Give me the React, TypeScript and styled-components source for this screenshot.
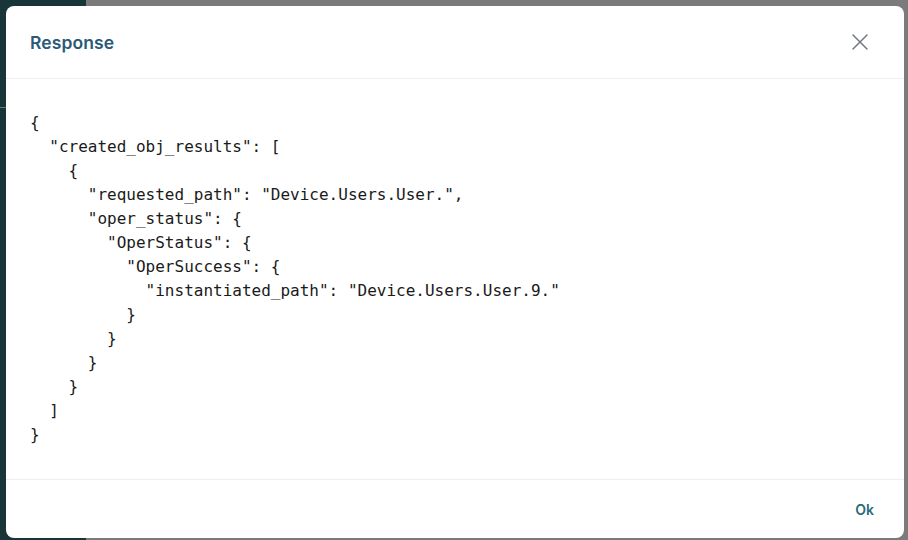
import React from 'react';
import styled, { createGlobalStyle } from 'styled-components';

const GlobalStyle = createGlobalStyle`
  html, body {
    margin: 0;
    padding: 0;
    width: 908px;
    height: 540px;
    overflow: hidden;
    font-family: Inter, "Noto Sans", sans-serif;
  }
`;

const Page = styled.div`
  position: relative;
  display: flex;
  width: 908px;
  height: 540px;
`;

const Sidebar = styled.div`
  width: 86px;
  background: #183638;
  display: flex;
  flex-direction: column;
`;

const SidebarRule = styled.div`
  margin-top: 107px;
  height: 1px;
  background: #6a7a7a;
`;

const Main = styled.div`
  flex: 1;
  background: #7b7b7b;
`;

const Overlay = styled.div`
  position: absolute;
  inset: 0;
  padding: 6px 4px 2px 6px;
  display: flex;
`;

const Dialog = styled.div`
  flex: 1;
  background: #fff;
  border-radius: 8px;
  display: flex;
  flex-direction: column;
  overflow: hidden;
`;

const Header = styled.div`
  height: 72px;
  display: flex;
  align-items: center;
  justify-content: space-between;
  padding: 0 28px 0 24px;
  border-bottom: 1px solid #eeeeee;
`;

const Title = styled.h2`
  margin: 0;
  font-size: 17.5px;
  font-weight: 600;
  color: #2c5a76;
  letter-spacing: 0.1px;
`;

const CloseButton = styled.button`
  width: 32px;
  height: 32px;
  border: 0;
  background: none;
  padding: 0;
  display: flex;
  align-items: center;
  justify-content: center;
  color: #737884;
  cursor: pointer;
`;

const Body = styled.div`
  flex: 1;
  padding: 32px 24px 0;
  border-bottom: 1px solid #eeeeee;
`;

const Code = styled.pre`
  margin: 0;
  font-family: "DejaVu Sans Mono", "Liberation Mono", monospace;
  font-size: 16px;
  line-height: 24px;
  color: #1a1a1a;
`;

const Footer = styled.div`
  height: 58px;
  display: flex;
  align-items: center;
  justify-content: flex-end;
  padding: 0 24px;
`;

const OkButton = styled.button`
  border: 0;
  background: none;
  padding: 6px 6px;
  font-family: Inter, "Noto Sans", sans-serif;
  font-size: 14px;
  font-weight: 600;
  color: #2a6b7c;
  cursor: pointer;
`;

const response = {
  created_obj_results: [
    {
      requested_path: 'Device.Users.User.',
      oper_status: {
        OperStatus: {
          OperSuccess: {
            instantiated_path: 'Device.Users.User.9.',
          },
        },
      },
    },
  ],
};

const App: React.FC = () => (
  <>
    <GlobalStyle />
    <Page>
      <Sidebar>
        <SidebarRule />
      </Sidebar>
      <Main />
      <Overlay>
        <Dialog>
          <Header>
            <Title>Response</Title>
            <CloseButton aria-label="Close">
              <svg width="16" height="16" viewBox="0 0 16 16" fill="none" stroke="currentColor" strokeWidth="1.5" strokeLinecap="round">
                <path d="M1 1 L15 15 M15 1 L1 15" />
              </svg>
            </CloseButton>
          </Header>
          <Body>
            <Code>{JSON.stringify(response, null, 2)}</Code>
          </Body>
          <Footer>
            <OkButton>Ok</OkButton>
          </Footer>
        </Dialog>
      </Overlay>
    </Page>
  </>
);

export default App;
